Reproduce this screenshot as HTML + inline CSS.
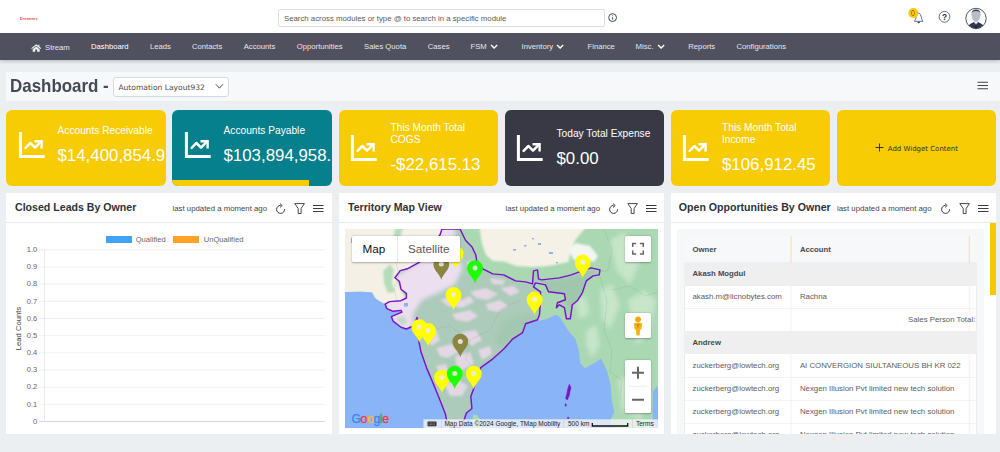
<!DOCTYPE html>
<html lang="en">
<head>
<meta charset="utf-8">
<title>Dashboard</title>
<style>
*{box-sizing:border-box;margin:0;padding:0}
html,body{width:1000px;height:452px;overflow:hidden}
body{background:#ebeff2;font-family:"Liberation Sans",Arial,sans-serif;position:relative;color:#333}
.abs{position:absolute}
#top{left:0;top:0;width:1000px;height:33px;background:#fff}
#logo{left:20px;top:16.5px;font-size:3.6px;color:#e8453c;font-weight:bold;letter-spacing:.15px;line-height:5px}
#search{left:278px;top:9px;width:327px;height:18px;border:1px solid #dcdfe3;border-radius:2px;background:#fff;font-size:7.8px;line-height:17px;padding-left:5px;color:#5a5a5a;white-space:nowrap;overflow:hidden}
#nav{left:0;top:33px;width:1000px;height:27.3px;background:#51505f;box-shadow:0 1.5px 3.5px rgba(60,60,70,.3)}
#nav span{position:absolute;top:.4px;line-height:27px;font-size:7.7px;color:#e6e6ec;white-space:nowrap}
#nav span.act{color:#fff}
#nav svg{position:absolute}
#titlebar{left:6px;top:72px;width:994px;height:29px;background:#f6f8fa}
#title{left:10px;top:74px;font-size:18.5px;font-weight:bold;color:#454b54;line-height:24px;white-space:nowrap;transform:scaleX(.915);transform-origin:0 0}
#sel{left:113px;top:77px;width:116px;height:19.5px;border:1px solid #d6dade;border-radius:3px;background:#fff;font-family:"DejaVu Sans","Liberation Sans",sans-serif;font-size:7.55px;line-height:17.5px;padding:1.1px 0 0 4.4px;color:#4a4a4a;white-space:nowrap}
.card{top:110px;height:75.5px;border-radius:6px;background:#f7cc04;color:#fff;overflow:hidden}
.card .t{position:absolute;left:51.5px;font-size:10.2px;line-height:12.5px;white-space:nowrap;color:#fff}
.card .v{position:absolute;left:51.5px;font-size:16.85px;line-height:20px;white-space:nowrap;color:#fff}
.card svg{position:absolute;left:12px}
.panel{top:192.5px;height:241px;background:#fff;overflow:hidden}
.ph{position:absolute;left:9px;top:7.5px;font-size:10.6px;font-weight:bold;color:#2f3238;line-height:14px;white-space:nowrap}
.upd{position:absolute;left:166.5px;top:10px;font-size:7.8px;color:#3f444a;line-height:12px;white-space:nowrap}
.hr{position:absolute;left:0;right:0;top:29px;height:1px;background:#e8ebee}
.ico{position:absolute;left:262px;top:10px}
.lg{font-size:7.6px;line-height:12px;color:#666;white-space:nowrap}
.yl{left:0;width:31.2px;text-align:right;font-size:7.55px;line-height:10px;color:#666;white-space:nowrap}
.ft{top:226.8px;font-size:6.5px;line-height:9px;color:#222;white-space:nowrap}
.mt{top:47.300px;font-size:11.700px;line-height:17px;white-space:nowrap}
.th{font-size:7.750px;font-weight:bold;line-height:12px;color:#454a50;white-space:nowrap}
.td{font-size:7.840px;line-height:12px;color:#5c5c5c;white-space:nowrap}
</style>
</head>
<body>
<svg width="0" height="0" style="position:absolute">
<defs>
<g id="chart" fill="none" stroke="#fff" stroke-linecap="butt" stroke-linejoin="miter">
<path d="M2.4 1.1V25.4H26.7" stroke-width="3"/>
<path d="M7.6 16.8L12.4 12L17 16.6L23 10.6" stroke-width="2.5" stroke-linecap="round" stroke-linejoin="round"/>
<path d="M17.7 10.2H23.6V16.2" stroke-width="2.4" stroke-linecap="square"/>
</g>
<g id="tools" fill="none" stroke="#3a3d44" stroke-width="1">
<path d="M16.6 6.2A4 4 0 1 1 12.6 2.4" />
<path d="M12 .6L14.2 2.5L12 4.4" stroke-width="1" fill="none"/>
<path d="M26.800 .600H36.400L33.100 5.500V10.500H30.200V5.500Z" stroke-linejoin="round" stroke-width=".95"/>
<path d="M45 2.5H55.5M45 5.5H55.5M45 8.5H55.5" stroke-width="1.2"/>
</g>
</defs>
</svg>
<div id="top" class="abs"></div>
<div id="logo" class="abs">Dreamers</div>
<div id="search" class="abs">Search across modules or type @ to search in a specific module</div>
<svg class="abs" style="left:607px;top:12px" width="12" height="12" viewBox="0 0 12 12"><circle cx="5.6" cy="5.6" r="3.9" fill="#fff" stroke="#333" stroke-width=".9"/><path d="M5.6 5v2.7M5.6 3.3v1" stroke="#2b6cb0" stroke-width="1"/></svg>
<!-- bell + badge -->
<svg class="abs" style="left:906px;top:6px" width="22" height="20" viewBox="0 0 22 20"><path d="M8.400 15.300C10.600 13.600 9.400 8 12.700 6.900C16 8 14.800 13.600 17 15.300Z" fill="#fff" stroke="#4a5060" stroke-width=".8" stroke-linejoin="round"/><path d="M11.700 16.100a1 .9 0 0 0 2 0Z" fill="#333" stroke="#333" stroke-width=".5"/><circle cx="7.300" cy="7" r="5" fill="#f7cc04"/></svg>
<div class="abs" style="left:911px;top:9.100px;font-size:8.200px;line-height:10px;color:#a3561e;transform:scaleX(.85);transform-origin:0 0">0</div>
<svg class="abs" style="left:938px;top:10px" width="14" height="14" viewBox="0 0 14 14"><circle cx="6.500" cy="6.800" r="5.400" fill="#fff" stroke="#444a58" stroke-width=".8"/></svg>
<div class="abs" style="left:942.100px;top:12px;font-size:8.400px;font-weight:bold;line-height:10px;color:#30343c">?</div>
<svg class="abs" style="left:964px;top:6px" width="24" height="25" viewBox="0 0 24 25"><defs><clipPath id="av"><circle cx="12" cy="12.500" r="9.800"/></clipPath></defs><circle cx="12" cy="12.500" r="10.200" fill="#fff" stroke="#3a3f50" stroke-width=".9"/><g clip-path="url(#av)"><path d="M7.400 8.500C7.400 2.500 16.600 2.500 16.600 8.500C16.600 11 15 14.500 13.500 15.300L13.700 17H10.300L10.500 15.300C9 14.500 7.400 11 7.400 8.500Z" fill="#b7bec5"/><path d="M7.500 7.300C8 2.300 16 2.300 16.500 7.300C15.500 4.300 8.500 4.300 7.500 7.300Z" fill="#2f3a4a"/><path d="M3 24C3.500 18.500 7.500 17 10 15.900L12 19L14 15.900C16.500 17 20.500 18.500 21 24Z" fill="#2c3a4c"/><path d="M10.600 16L12 19.300L13.400 16L12 15.300Z" fill="#f1f3f5"/><path d="M11.500 17.600h1l.6 5h-2.200Z" fill="#1f2937"/></g></svg>
<div id="nav" class="abs">
<svg style="left:30.7px;top:10.6px" width="10.4" height="8" viewBox="0 0 11 9" preserveAspectRatio="none"><path d="M5.5 .3L.2 4.7L1 5.5L5.5 1.9L10 5.5L10.8 4.7L8.9 3.1V.9H7.7V2.1Z M5.5 2.9L1.8 5.9V8.7H4.5V6.3H6.5V8.7H9.2V5.9Z" fill="#f0f0f4"/></svg>
<span style="left:45px;top:1.1px">Stream</span>
<span class="act" style="left:91px">Dashboard</span>
<span style="left:150px">Leads</span>
<span style="left:192px">Contacts</span>
<span style="left:243.7px">Accounts</span>
<span style="left:296.8px">Opportunities</span>
<span style="left:364px">Sales Quota</span>
<span style="left:427.8px">Cases</span>
<span style="left:470.5px">FSM</span>
<svg style="left:489.8px;top:11px" width="8.4" height="5.4" viewBox="0 0 9 6"><path d="M1 1.2L4.4 4.5L7.8 1.2" fill="none" stroke="#fff" stroke-width="1.6"/></svg>
<span style="left:521.5px">Inventory</span>
<svg style="left:555.8px;top:11px" width="8.4" height="5.4" viewBox="0 0 9 6"><path d="M1 1.2L4.4 4.5L7.8 1.2" fill="none" stroke="#fff" stroke-width="1.6"/></svg>
<span style="left:587.5px">Finance</span>
<span style="left:635.6px">Misc.</span>
<svg style="left:656.8px;top:11px" width="8.4" height="5.4" viewBox="0 0 9 6"><path d="M1 1.2L4.4 4.5L7.8 1.2" fill="none" stroke="#fff" stroke-width="1.6"/></svg>
<span style="left:688.3px">Reports</span>
<span style="left:736.5px">Configurations</span>
</div>
<div id="titlebar" class="abs"></div>
<div id="title" class="abs">Dashboard -</div>
<div id="sel" class="abs">Automation Layout932</div>
<svg class="abs" style="left:214.5px;top:83.3px" width="9" height="7" viewBox="0 0 9 7"><path d="M.8 1.2L4.4 5.2L8 1.2" fill="none" stroke="#444" stroke-width=".9"/></svg>
<svg class="abs" style="left:977px;top:80px" width="12" height="11" viewBox="0 0 12 11"><path d="M.5 2.2H11M.5 5.5H11M.5 8.8H11" stroke="#444" stroke-width="1.1"/></svg>

<div class="card abs" style="left:6px;width:160px"><svg style="top:21px" width="28" height="28"><use href="#chart"/></svg><div class="t" style="top:14.5px">Accounts Receivable</div><div class="v" style="top:35.5px">$14,400,854.9</div></div>
<div class="card abs" style="left:172px;width:159.5px;background:#06808c"><div style="position:absolute;left:0;bottom:0;width:137px;height:5.2px;background:#f7cc04"></div><svg style="top:21px" width="28" height="28"><use href="#chart"/></svg><div class="t" style="top:14.5px">Accounts Payable</div><div class="v" style="top:35.5px">$103,894,958.</div></div>
<div class="card abs" style="left:339px;width:159px"><svg style="top:23.6px;left:11.3px" width="28" height="28"><use href="#chart"/></svg><div class="t" style="top:11.8px">This Month Total<br>COGS</div><div class="v" style="top:44.7px">-$22,615.13</div></div>
<div class="card abs" style="left:505px;width:159px;background:#393945"><svg style="top:23.6px;left:11.3px" width="28" height="28"><use href="#chart"/></svg><div class="t" style="top:18px">Today Total Expense</div><div class="v" style="top:38.5px">$0.00</div></div>
<div class="card abs" style="left:670.5px;width:159.5px"><svg style="top:23.6px;left:11.3px" width="28" height="28"><use href="#chart"/></svg><div class="t" style="top:11.8px">This Month Total<br>Income</div><div class="v" style="top:44.7px">$106,912.45</div></div>
<div class="card abs" style="left:837px;width:159px"><svg style="left:38px;top:33px" width="10" height="10" viewBox="0 0 10 10"><path d="M4.5 .5V8.5M.5 4.5H8.5" stroke="#222" stroke-width=".9"/></svg><div style="position:absolute;left:50.8px;top:31.6px;font-family:'DejaVu Sans','Liberation Sans',sans-serif;font-size:6.98px;color:#333;line-height:14px;white-space:nowrap">Add Widget Content</div></div>
<div class="panel abs" style="left:6px;width:326px"><div class="ph">Closed Leads By Owner</div><div class="upd">last updated a moment ago</div><svg class="ico" width="60" height="13"><use href="#tools"/></svg><div class="hr"></div>
<div class="abs" style="left:99.5px;top:43.2px;width:26.3px;height:7.3px;background:#3fa2f4"></div>
<div class="abs lg" style="left:129.7px;top:41px">Qualified</div>
<div class="abs" style="left:167px;top:43.2px;width:26.3px;height:7.3px;background:#ffa326"></div>
<div class="abs lg" style="left:197.7px;top:41px">UnQualified</div>
<svg class="abs" style="left:0;top:0" width="326" height="241"><path d="M33.2 211.33H319" stroke="#ececec" stroke-width=".8"/><path d="M33.2 194.16H319" stroke="#ececec" stroke-width=".8"/><path d="M33.2 176.99H319" stroke="#ececec" stroke-width=".8"/><path d="M33.2 159.82H319" stroke="#ececec" stroke-width=".8"/><path d="M33.2 142.65H319" stroke="#ececec" stroke-width=".8"/><path d="M33.2 125.48H319" stroke="#ececec" stroke-width=".8"/><path d="M33.2 108.31H319" stroke="#ececec" stroke-width=".8"/><path d="M33.2 91.14H319" stroke="#ececec" stroke-width=".8"/><path d="M33.2 73.97H319" stroke="#ececec" stroke-width=".8"/><path d="M33.2 56.80H319" stroke="#ececec" stroke-width=".8"/><path d="M33.2 228.50H319" stroke="#cfcfcf" stroke-width=".9"/><path d="M38.5 56.80V228.50" stroke="#e4e4e4" stroke-width=".8"/></svg>
<div class="abs yl" style="top:224.20px">0</div>
<div class="abs yl" style="top:207.03px">0.1</div>
<div class="abs yl" style="top:189.86px">0.2</div>
<div class="abs yl" style="top:172.69px">0.3</div>
<div class="abs yl" style="top:155.52px">0.4</div>
<div class="abs yl" style="top:138.35px">0.5</div>
<div class="abs yl" style="top:121.18px">0.6</div>
<div class="abs yl" style="top:104.01px">0.7</div>
<div class="abs yl" style="top:86.84px">0.8</div>
<div class="abs yl" style="top:69.67px">0.9</div>
<div class="abs yl" style="top:52.50px">1.0</div>
<div class="abs" style="left:-10.4px;top:131.3px;width:44px;height:9px;font-size:7.7px;line-height:9px;color:#444;text-align:center;white-space:nowrap;transform:rotate(-90deg)">Lead Counts</div>
</div>
<div class="panel abs" style="left:339px;width:325px"><div class="ph">Territory Map View</div><div class="upd">last updated a moment ago</div><svg class="ico" width="60" height="13"><use href="#tools"/></svg><div class="hr"></div>
<svg class="abs" style="left:6px;top:36.5px" width="313" height="199.3" viewBox="345 229 313 199.3">
<defs>
<clipPath id="mc"><rect x="345" y="229" width="313" height="199.3"/></clipPath>
<filter id="bl" x="-20%" y="-20%" width="140%" height="140%"><feGaussianBlur stdDeviation="1.2"/></filter>
<filter id="bl2" x="-20%" y="-20%" width="140%" height="140%"><feGaussianBlur stdDeviation="2.2"/></filter>
<g id="pin"><path d="M0 0C-1.200 -5.500 -7.900 -9.500 -7.900 -15.600A7.900 7.800 0 0 1 7.900 -15.600C7.900 -9.500 1.200 -5.500 0 0Z"/><circle cx="0" cy="-15.700" r="2.500" fill="#efe9f0" fill-opacity=".88"/></g>
<path id="india" d="M460 229L465.5 240.2L472 247L475.8 255L476.8 261L482.8 268.9L492.7 273.9L503.7 274.9L515.6 280.9L525.6 281.9L532.5 283.9L533.5 270.9L537.5 269.9L538.5 278.9L541.5 279.9L559.4 277.9L571.3 274.9L579.3 271.9L591.2 267.9L600 269.9L599.2 274.9L593.2 275.9L586.3 280.9L582.3 292.8L577.3 300.8L572.3 304.8L570.3 318.7L566.4 318.7L564.4 307.7L559.4 304.8L556.4 307.7L557.4 302.8L565.4 299.8L564.4 293.8L548.5 291.8L545.5 284.9L535.5 282.9L533.5 286.8L540.5 291.8L540.5 299.8L539.5 314.7L537.5 319.7L525.6 323.7L522.6 332.6L512.8 338.8L504 348.8L492.9 358.8L485.2 364.3L480.8 367.6L476.3 376.5L474.1 387.5L470.8 396.4L471.9 408.5L466.4 413L464.2 419.6L459 427.5L455 428.3L450 427L446.5 419.6L445.4 414.1L442 405.2L437.6 394.2L432.1 380.9L426.5 367.6L421 352.1L418.8 341L418 332L417.9 320.2L417 317.5L414.3 325.5L406.4 329L401 327.3L393.1 321.1L391.3 316.6L402 312.2L401 310.4L393.1 311.3L386.9 308.7L385.1 304.2L389.6 301.6L401 300.7L406.4 298L406.4 293.6L401 289.2L399.3 281.2L394.9 277.7L400.2 270.6L407.3 268.8L419.6 262.1L428 252L434 243L440 235L442 229Z"/>
<path id="cont" d="M345 229L658 229L658 386L653 391L652.5 428.3L612 428.3L610.7 419.3L614.4 412L612 402.3L610.7 385.3L607 370.7L601 358.5L596 362L585.2 368.2L580.3 363.4L579 351.2L575.3 338.6L569.4 332.6L563.4 322.7L559.4 316.7L555.4 314.7L547.5 318.7L539.5 320.7L537.5 319.7L525.6 323.7L522.6 332.6L512.8 338.8L504 348.8L492.9 358.8L485.2 364.3L480.8 367.6L476.3 376.5L474.1 387.5L470.8 396.4L471.9 408.5L466.4 413L464.2 419.6L459 427.5L455 428.3L450 427L446.5 419.6L445.4 414.1L442 405.2L437.6 394.2L432.1 380.9L426.5 367.6L421 352.1L418.8 341L418 332L417.9 320.2L417 317.5L414.3 325.5L406.4 329L401 327.3L393.1 321.1L391.3 316.6L402 312.2L401 310.4L393.1 311.3L386.9 308.7L385.1 304.2L380 301.5L375 298L372 292.3L360 291.5L345 292Z"/>
<clipPath id="ic"><use href="#india"/></clipPath>
<clipPath id="cc"><use href="#cont"/></clipPath>
</defs>
<g clip-path="url(#mc)">
<rect x="345" y="229" width="313" height="199.300" fill="#8ab4f8"/>
<use href="#cont" fill="#a9d8b3"/>
<g clip-path="url(#cc)">
<!-- cream: Pakistan / Afghanistan -->
<g filter="url(#bl)">
<path d="M340 225H446L436 242L422 262L408 270L396 278L401 290L406 299L386 305L376 300L372 294H340Z" fill="#f4f0e5"/>
<path d="M383 271L390 264L394 270L392 282L395 292L388 293L384 284Z" fill="#b5dcba"/>
<path d="M396 225H404L400 238H393Z" fill="#b5dcba"/>
<!-- cream: Tibet -->
<path d="M479 225H588L576 239L571 249L568.500 262L549 266L532 267L516 266L504 261.500L493 261L486 255L482 244Z" fill="#f5f1e6"/>
<path d="M568 250L576 243L590 246L598 256L594 262L584 259L574 260Z" fill="#f3f6f2"/>
</g>
<g filter="url(#bl2)" fill="#c6e5c9">
<path d="M600 290L612 284L620 305L610 330L602 318Z"/>
<path d="M628 300L644 290L656 300L650 335L636 345Z"/>
<path d="M586 330L596 325L600 345L592 358L586 345Z"/>
<path d="M610 240L625 232L640 262L630 285L616 270Z"/>
<path d="M618 380L640 370L650 395L640 420L622 410Z"/>
<path d="M575 300L585 296L590 312L580 320Z"/>
</g>
<g fill="#8ab4f8"><rect x="513" y="249" width="3" height="1.600"/><rect x="524" y="245" width="2.500" height="1.500"/><rect x="538" y="243" width="3" height="2"/><rect x="549" y="252" width="4" height="2"/><rect x="532" y="238" width="2" height="1.400"/><rect x="351" y="238" width="3" height="5"/><rect x="556" y="262" width="2" height="1.300"/></g>
</g>
<!-- Sri Lanka -->
<path d="M473 414.500L477 415L480.500 420L482 428.300H474L472.500 420Z" fill="#a9d8b3"/>
<!-- India -->
<g clip-path="url(#ic)">
<rect x="380" y="229" width="230" height="200" fill="#accbba"/>
<g filter="url(#bl2)">
<path d="M442 225L420 262L392 278L398 290L382 304L390 320L405 332L414 326L413 314L422 300L438 293L455 284L462 270L460 254L456 240L454 225Z" fill="#ebdff0"/>
<path d="M462 225L470 240L478 254L484 270L494 274L484 262L478 240L472 225Z" fill="#9fcdae"/>
<path d="M540 282L570 278L596 270L590 280L580 300L572 312L564 300L546 290Z" fill="#9ec7ac"/>
<path d="M505 320L530 312L536 322L515 338L500 348L494 338Z" fill="#a3c8b1"/>
</g>
<g filter="url(#bl)" fill="#e2d7e3">
<path d="M440 300L452 296L462 300L470 296L474 302L462 308L448 306Z"/>
<path d="M452 314L470 310L478 316L468 322L456 320Z"/>
<path d="M470 292L486 288L498 294L488 300L476 298Z"/>
<path d="M486 304L500 300L508 306L498 312L488 310Z"/>
<path d="M500 288L514 286L520 292L510 296Z"/>
<path d="M424 332L436 330L440 340L432 346L426 340Z"/>
<path d="M436 348L452 344L458 352L448 358L440 356Z"/>
<path d="M462 332L476 330L482 340L472 346L464 340Z"/>
<path d="M455 356L470 352L474 364L462 370L456 364Z"/>
<path d="M478 350L490 346L492 354L482 360Z"/>
<path d="M436 366L446 364L450 376L442 380Z"/>
<path d="M444 384L458 380L468 386L462 396L450 396Z"/>
<path d="M466 262L476 260L480 268L470 272Z"/>
<path d="M490 278L505 280L503 285L492 284Z"/>
<path d="M396 318L404 316L408 322L402 326Z" fill="#c4d9c8"/>
</g>
<rect x="404" y="303" width="4" height="3.500" fill="#8ab4f8"/>
</g>
<use href="#india" fill="none" stroke="#7a14c4" stroke-width="1.450" stroke-linejoin="round"/>
<!-- Andaman -->
<path d="M569.300 384.300L571 387.500L570 391.500L569.300 395.500L567.300 400L565.600 398.500L567 393L567.800 388.500Z M565.600 403.500L566.600 405L565.800 406.600L565 405Z M567.500 417.300h1.400v1.300h-1.400Z" fill="#7a14c4" stroke="#7a14c4" stroke-width=".5"/>
<!-- thin border lines -->
<g fill="none" stroke="#8f9a92" stroke-width=".4" stroke-dasharray="1 .8">
<path d="M396 262L399 275L394 290L397 300"/><path d="M600 277L607 300L604 330L612 350L610 372"/><path d="M612 290L630 286L645 296L658 292"/><path d="M610 372L622 380L620 400"/><path d="M604 229L612 250L608 270L600 272"/>
<path d="M430 330L450 326L470 340L490 330L500 310L520 300"/><path d="M440 380L455 372L470 376"/><path d="M470 340L466 360L478 372"/>
</g>
<!-- markers -->
<use href="#pin" x="455.500" y="269" fill="#ffff00"/>
<use href="#pin" x="441.300" y="279.800" fill="#8a8640"/>
<use href="#pin" x="475" y="283.600" fill="#1eff00"/>
<use href="#pin" x="453.500" y="310.400" fill="#ffff00"/>
<use href="#pin" x="582.700" y="278" fill="#ffff00"/>
<use href="#pin" x="534.600" y="315" fill="#ffff00"/>
<use href="#pin" x="419.300" y="342.700" fill="#ffff00"/>
<use href="#pin" x="428" y="346.300" fill="#ffff00"/>
<use href="#pin" x="460.300" y="357.200" fill="#8a8640"/>
<use href="#pin" x="442" y="393.100" fill="#ffff00"/>
<use href="#pin" x="454.700" y="389.200" fill="#1eff00"/>
<use href="#pin" x="473.800" y="389.200" fill="#ffff00"/>
<!-- footer -->
<rect x="423.400" y="419.300" width="234.600" height="9" fill="#f5f5f5" fill-opacity=".78"/>
<g stroke="#c8c8c8" stroke-width=".5"><path d="M441.500 419.300v9M563.500 419.300v9M632.500 419.300v9"/></g>
<rect x="427.500" y="421.600" width="9" height="4.600" rx=".6" fill="#333"/>
<path d="M428.500 423h7M428.500 424.700h7" stroke="#eee" stroke-width=".5" stroke-dasharray=".9 .5"/>
<path d="M592.300 423V426H627.700V423" fill="none" stroke="#111" stroke-width="1.300"/>
</g>
</svg>
<div class="abs ft" style="left:105.4px">Map Data ©2024 Google, TMap Mobility</div>
<div class="abs ft" style="left:229px">500 km</div>
<div class="abs ft" style="left:297px">Terms</div>
<div class="abs" style="left:12.400px;top:218.500px;font-size:12.2px;line-height:16px;letter-spacing:-.35px;font-weight:normal;white-space:nowrap;-webkit-text-stroke:.35px currentColor"><span style="color:#4285f4">G</span><span style="color:#ea4335">o</span><span style="color:#fbbc05">o</span><span style="color:#4285f4">g</span><span style="color:#34a853">l</span><span style="color:#ea4335">e</span></div>
<!-- controls -->
<div class="abs" style="left:12.700px;top:43.500px;width:108.300px;height:25.700px;background:#fff;border-radius:1.500px;box-shadow:0 .5px 2px rgba(0,0,0,.3)"></div>
<div class="abs" style="left:57.700px;top:43.500px;width:.7px;height:25.700px;background:#e4e4e4"></div>
<div class="abs mt" style="left:23.600px;color:#111">Map</div>
<div class="abs mt" style="left:68.900px;color:#5a5a5a">Satellite</div>
<div class="abs" style="left:286.300px;top:43.500px;width:26px;height:25.700px;background:#fff;border-radius:1.500px;box-shadow:0 .5px 2px rgba(0,0,0,.3)"><svg width="26" height="26" viewBox="0 0 26 26"><path d="M7.700 11V7.600H11.100M14.900 7.600H18.300V11M18.300 14.600V18H14.900M11.100 18H7.700V14.600" fill="none" stroke="#666" stroke-width="1.500"/></svg></div>
<div class="abs" style="left:286.300px;top:120.700px;width:26px;height:25.300px;background:#fff;border-radius:1.500px;box-shadow:0 .5px 2px rgba(0,0,0,.3)"><svg width="26" height="26" viewBox="0 0 26 26"><circle cx="13" cy="6.300" r="2.900" fill="#f3a800"/><path d="M8.800 10.500Q13 8.300 17.200 10.500L16.300 16.500L15 16.800L14.600 22.500H11.400L11 16.800L9.700 16.500Z" fill="#f6b21b"/><path d="M11.300 11L13 16L14.700 11Z" fill="#e08f00"/></svg></div>
<div class="abs" style="left:286.300px;top:167.200px;width:26px;height:53.100px;background:#fff;border-radius:1.500px;box-shadow:0 .5px 2px rgba(0,0,0,.3)"><svg width="26" height="53" viewBox="0 0 26 53"><path d="M7 12.700H19M13 6.700V18.700M7 39.700H19" stroke="#666" stroke-width="2"/><path d="M4 26.300H22" stroke="#e6e6e6" stroke-width=".7"/></svg></div>
</div>
<div class="panel abs" style="left:670.5px;width:325.5px"><div class="ph" style="left:8.3px">Open Opportunities By Owner</div><div class="upd">last updated a moment ago</div><svg class="ico" style="left:262.5px" width="60" height="13"><use href="#tools"/></svg><div class="hr"></div>
<div class="abs" style="left:6.5px;top:36.2px;width:306.5px;height:210px;background:#f6f7f9"></div>
<div class="abs" style="left:13.2px;top:43.2px;width:293.3px;height:200px;background:#fff;border:.6px solid #ececec"></div>
<div class="abs" style="left:13.2px;top:43.2px;width:293.3px;height:26.3px;background:#f7f8fa"></div>
<div class="abs" style="left:13.2px;top:69.5px;width:293.3px;height:23.5px;background:#efefef"></div>
<div class="abs" style="left:13.2px;top:138.7px;width:293.3px;height:22.6px;background:#efefef"></div>
<svg class="abs" style="left:0;top:0" width="326" height="241"><g stroke="#ececec" stroke-width=".7"><path d="M13.2 115.5H306.5M13.2 184.5H306.5M13.2 207.5H306.5M13.2 230.5H306.5"/><path d="M120 93V138.700M120 161.300V241M298.300 93V138.700M298.300 161.300V241"/></g><path d="M120 43.200V69.500M298.300 43.200V69.500" stroke="#f1dc84" stroke-width=".8"/></svg>
<div class="abs th" style="left:22px;top:51px">Owner</div><div class="abs th" style="left:129.400px;top:51px">Account</div>
<div class="abs th" style="left:22px;top:75.500px">Akash Mogdul</div>
<div class="abs td" style="left:22px;top:98.900px">akash.m@licnobytes.com</div><div class="abs td" style="left:129.400px;top:98.900px">Rachna</div>
<div class="abs td" style="right:20.700px;top:121.900px">Sales Person Total:</div>
<div class="abs th" style="left:22px;top:144px">Andrew</div>
<div class="abs td" style="left:22px;top:167.900px">zuckerberg@lowtech.org</div><div class="abs td" style="left:129.400px;top:167.900px">AI CONVERGION SIULTANEOUS BH KR 022</div>
<div class="abs td" style="left:22px;top:190.900px">zuckerberg@lowtech.org</div><div class="abs td" style="left:129.400px;top:190.900px">Nexgen Illusion Pvt limited new tech solution</div>
<div class="abs td" style="left:22px;top:213.900px">zuckerberg@lowtech.org</div><div class="abs td" style="left:129.400px;top:213.900px">Nexgen Illusion Pvt limited new tech solution</div>
<div class="abs td" style="left:22px;top:236.900px">zuckerberg@lowtech.org</div><div class="abs td" style="left:129.400px;top:236.900px">Nexgen Illusion Pvt limited new tech solution</div>
<div class="abs" style="left:313px;top:30px;width:12.500px;height:211px;background:#fff"></div>
<div class="abs" style="left:319.300px;top:30px;width:6.200px;height:72px;background:#f7c800"></div>
</div>
</body>
</html>
